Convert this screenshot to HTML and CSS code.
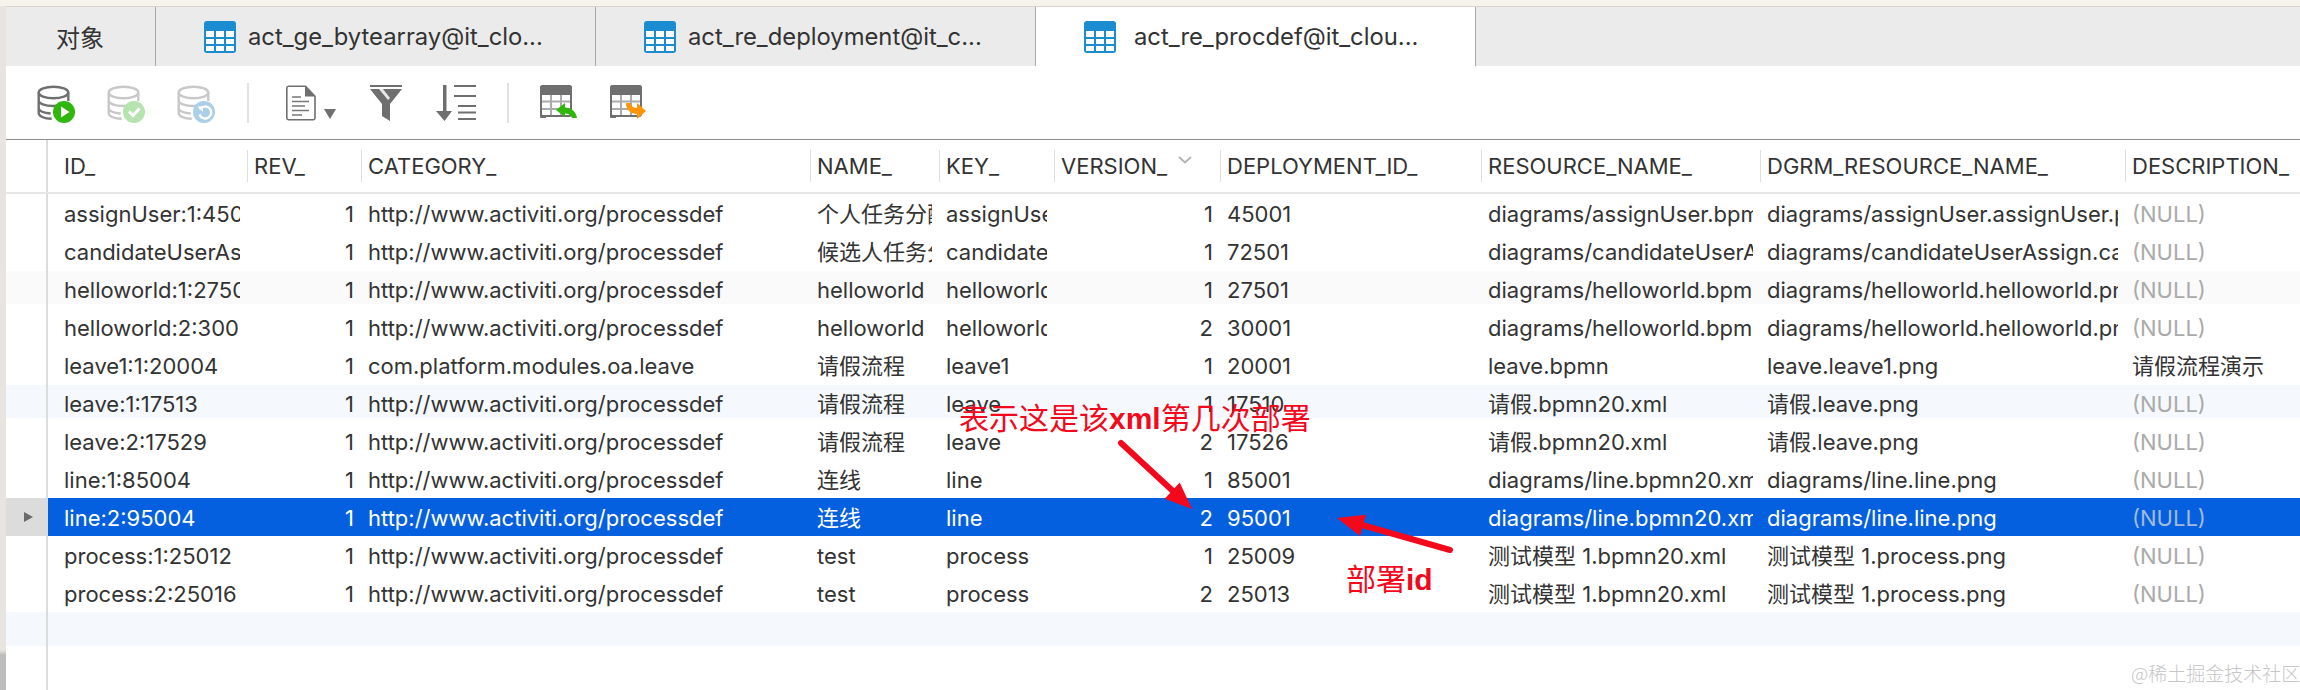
FILE: index.html
```html
<!DOCTYPE html>
<html lang="zh">
<head>
<meta charset="utf-8">
<title>act_re_procdef</title>
<link rel="stylesheet" href="styles.css">
</head>
<body>
<svg width="0" height="0" class="defs">
  <defs>
    <symbol id="tbl" viewBox="0 0 32 32">
      <rect width="32" height="32" rx="3" fill="#1b8ccf"/>
      <path fill="#fff" d="M2 10h8v6H2zM12 10h8v6h-8zM22 10h8v6h-8zM2 18h8v5H2zM12 18h8v5h-8zM22 18h8v5h-8zM2 25h8v5H2zM12 25h8v5h-8zM22 25h8v5h-8z"/>
    </symbol>
    <symbol id="db" viewBox="0 0 38 38">
      <g fill="none" stroke="currentColor" stroke-width="2.4">
        <ellipse cx="16.5" cy="7.500" rx="14.800" ry="5.800"/>
        <path d="M1.700 7.500V28c0 3 5 5.800 13 5.800M31.300 7.500V16M1.700 15.500c0 3 6 5.500 14.800 5.500 3 0 5-.3 7-.8M1.700 23c0 3 5 5.200 12 5.500"/>
      </g>
    </symbol>
    <symbol id="grid" viewBox="0 0 38 36">
      <rect x="1" y="1" width="30" height="30" rx="2" fill="#fff" stroke="#6f6f6f" stroke-width="2"/>
      <path d="M3 0h26a3 3 0 0 1 3 3v7H0V3a3 3 0 0 1 3-3z" fill="#6f6f6f"/>
      <path d="M2 16.500h28M2 24h28M11 10v20M21 10v20" stroke="#ababab" stroke-width="2"/>
      <path d="M0 3v27a2 2 0 0 0 2 2h4" fill="none" stroke="#6f6f6f" stroke-width="2"/>
    </symbol>
  </defs>
</svg>
<div class="app">
  <nav class="tabs">
    <div class="tab tab-obj">对象</div>
    <div class="tab"><svg class="tab-icon"><use href="#tbl"/></svg><span>act_ge_bytearray@it_clo...</span></div>
    <div class="tab"><svg class="tab-icon"><use href="#tbl"/></svg><span>act_re_deployment@it_c...</span></div>
    <div class="tab tab-active"><svg class="tab-icon"><use href="#tbl"/></svg><span>act_re_procdef@it_clou...</span></div>
  </nav>
  <div class="toolbar">
    <svg class="ico-db db-run" viewBox="0 0 38 38"><use href="#db" width="38" height="38"/><circle cx="27" cy="27" r="11" fill="#2fb70b"/><path d="M24 21.500l8.500 5.500-8.500 5.500z" fill="#fff"/></svg>
    <svg class="ico-db db-off" viewBox="0 0 38 38"><use href="#db" width="38" height="38"/><circle cx="27" cy="27" r="11" fill="#b5e4ae"/><path d="M22 26.500l4 4 6.500-7" fill="none" stroke="#fff" stroke-width="3"/></svg>
    <svg class="ico-db db-off" viewBox="0 0 38 38"><use href="#db" width="38" height="38"/><circle cx="27" cy="27" r="11" fill="#a9cfe9"/><path d="M23 24.500a6 6 0 1 1-.5 5" fill="none" stroke="#fff" stroke-width="2.400"/><path d="M20.500 21.500h5.500v5.500z" fill="#fff"/></svg>
    <i class="tool-sep"></i>
    <svg class="ico-doc" viewBox="0 0 50 36"><path d="M2.500 1.200h17l9.500 10V33a1.800 1.800 0 0 1-1.800 1.800H2.500A1.800 1.800 0 0 1 .8 33V3a1.800 1.800 0 0 1 1.700-1.800z" fill="#fff" stroke="#6f6f6f" stroke-width="1.600"/><path d="M19 1l10 10.500H19z" fill="#6f6f6f"/><path d="M6 12h9M6 16.500h17M6 21h13M6 25.500h17M6 30h10" stroke="#777" stroke-width="1.600"/><path d="M38 24h12l-6 10z" fill="#6f6f6f"/></svg>
    <svg class="ico-filter" viewBox="0 0 32 36"><path d="M0 0h32v2H0z" fill="#6f6f6f"/><path d="M0 4h32L20 19v17l-8-5V19z" fill="#6f6f6f"/><path d="M9 4h4l7 9-2 2z" fill="#e9e9e9"/></svg>
    <svg class="ico-sort" viewBox="0 0 40 36"><path d="M7 0h3.500v26H16l-7.500 10L0 26h7z" fill="#6f6f6f"/><path d="M18 1h22M18 11h22M22 21h18M22 27.500h18M22 34h18" stroke="#6f6f6f" stroke-width="2"/></svg>
    <i class="tool-sep tool-sep-tight"></i>
    <svg class="ico-tbl" viewBox="0 0 38 36"><use href="#grid" width="38" height="36"/><path d="M16 25l9-7v4.500c6 .3 11 3.500 12 10.500h-5c-1-3-3.500-4.500-7-4.500V32z" fill="#2fb70b"/></svg>
    <svg class="ico-tbl" viewBox="0 0 38 36"><use href="#grid" width="38" height="36"/><path d="M16 18h4.500c.5 3 3 5 6.500 5v-5l9 8-9 8v-5c-6 0-11-4-11-11z" fill="#ff9407"/></svg>
  </div>
  <div class="head">
    <div class="gutter"></div>
    <div class="hc hc-first">ID_</div>
    <div class="hc">REV_</div>
    <div class="hc">CATEGORY_</div>
    <div class="hc">NAME_</div>
    <div class="hc">KEY_</div>
    <div class="hc hc-sort">VERSION_<svg class="chev" viewBox="0 0 14 8"><path d="M1 1l6 5.500L13 1" fill="none" stroke="#b4b4b4" stroke-width="2"/></svg></div>
    <div class="hc">DEPLOYMENT_ID_</div>
    <div class="hc">RESOURCE_NAME_</div>
    <div class="hc">DGRM_RESOURCE_NAME_</div>
    <div class="hc">DESCRIPTION_</div>
  </div>
  <div class="rows">
    <div class="row"><div class="gutter"></div><div class="c c-first">assignUser:1:45004</div><div class="c num">1</div><div class="c">http://www.activiti.org/processdef</div><div class="c">个人任务分配流程</div><div class="c">assignUser</div><div class="c num">1</div><div class="c">45001</div><div class="c">diagrams/assignUser.bpmn20.xml</div><div class="c">diagrams/assignUser.assignUser.png</div><div class="c null">(NULL)</div></div>
    <div class="row"><div class="gutter"></div><div class="c c-first">candidateUserAssign:1:72504</div><div class="c num">1</div><div class="c">http://www.activiti.org/processdef</div><div class="c">候选人任务分配</div><div class="c">candidateUserAssign</div><div class="c num">1</div><div class="c">72501</div><div class="c">diagrams/candidateUserAssign.bpmn20.xml</div><div class="c">diagrams/candidateUserAssign.candidateUserAssign.png</div><div class="c null">(NULL)</div></div>
    <div class="row stripe-gray"><div class="gutter"></div><div class="c c-first">helloworld:1:27504</div><div class="c num">1</div><div class="c">http://www.activiti.org/processdef</div><div class="c">helloworld</div><div class="c">helloworld</div><div class="c num">1</div><div class="c">27501</div><div class="c">diagrams/helloworld.bpmn20.xml</div><div class="c">diagrams/helloworld.helloworld.png</div><div class="c null">(NULL)</div></div>
    <div class="row"><div class="gutter"></div><div class="c c-first">helloworld:2:30004</div><div class="c num">1</div><div class="c">http://www.activiti.org/processdef</div><div class="c">helloworld</div><div class="c">helloworld</div><div class="c num">2</div><div class="c">30001</div><div class="c">diagrams/helloworld.bpmn20.xml</div><div class="c">diagrams/helloworld.helloworld.png</div><div class="c null">(NULL)</div></div>
    <div class="row"><div class="gutter"></div><div class="c c-first">leave1:1:20004</div><div class="c num">1</div><div class="c">com.platform.modules.oa.leave</div><div class="c">请假流程</div><div class="c">leave1</div><div class="c num">1</div><div class="c">20001</div><div class="c">leave.bpmn</div><div class="c">leave.leave1.png</div><div class="c">请假流程演示</div></div>
    <div class="row stripe-blue"><div class="gutter"></div><div class="c c-first">leave:1:17513</div><div class="c num">1</div><div class="c">http://www.activiti.org/processdef</div><div class="c">请假流程</div><div class="c">leave</div><div class="c num">1</div><div class="c">17510</div><div class="c">请假.bpmn20.xml</div><div class="c">请假.leave.png</div><div class="c null">(NULL)</div></div>
    <div class="row"><div class="gutter"></div><div class="c c-first">leave:2:17529</div><div class="c num">1</div><div class="c">http://www.activiti.org/processdef</div><div class="c">请假流程</div><div class="c">leave</div><div class="c num">2</div><div class="c">17526</div><div class="c">请假.bpmn20.xml</div><div class="c">请假.leave.png</div><div class="c null">(NULL)</div></div>
    <div class="row"><div class="gutter"></div><div class="c c-first">line:1:85004</div><div class="c num">1</div><div class="c">http://www.activiti.org/processdef</div><div class="c">连线</div><div class="c">line</div><div class="c num">1</div><div class="c">85001</div><div class="c">diagrams/line.bpmn20.xml</div><div class="c">diagrams/line.line.png</div><div class="c null">(NULL)</div></div>
    <div class="row selected"><div class="gutter"><svg class="marker" viewBox="0 0 9 10"><path d="M0 0l9 5-9 5z" fill="#6b6b6b"/></svg></div><div class="c c-first">line:2:95004</div><div class="c num">1</div><div class="c">http://www.activiti.org/processdef</div><div class="c">连线</div><div class="c">line</div><div class="c num">2</div><div class="c">95001</div><div class="c">diagrams/line.bpmn20.xml</div><div class="c">diagrams/line.line.png</div><div class="c null">(NULL)</div></div>
    <div class="row"><div class="gutter"></div><div class="c c-first">process:1:25012</div><div class="c num">1</div><div class="c">http://www.activiti.org/processdef</div><div class="c">test</div><div class="c">process</div><div class="c num">1</div><div class="c">25009</div><div class="c">测试模型 1.bpmn20.xml</div><div class="c">测试模型 1.process.png</div><div class="c null">(NULL)</div></div>
    <div class="row"><div class="gutter"></div><div class="c c-first">process:2:25016</div><div class="c num">1</div><div class="c">http://www.activiti.org/processdef</div><div class="c">test</div><div class="c">process</div><div class="c num">2</div><div class="c">25013</div><div class="c">测试模型 1.bpmn20.xml</div><div class="c">测试模型 1.process.png</div><div class="c null">(NULL)</div></div>
    <div class="row row-empty"><div class="gutter"></div></div>
    <div class="row-fill"><div class="gutter"></div></div>
  </div>
</div>
<svg class="arrows" viewBox="0 0 2300 690">
  <path d="M1121 443L1174 492M1450 550L1362 525" stroke="#f4081c" stroke-width="6" stroke-linecap="round" fill="none"/>
  <path d="M1192 509L1164.700 498.700L1179.700 482.500zM1337 518L1366 514.800L1360 536z" fill="#f4081c"/>
</svg>
<div class="note note-version">表示这是该<b>xml</b>第几次部署</div>
<div class="note note-id">部署<b>id</b></div>
<div class="watermark">@稀土掘金技术社区</div>
</body>
</html>
```

FILE: styles.css
```css
* { box-sizing: border-box; }
html, body { margin: 0; height: 100%; }
body {
  position: relative;
  height: 690px;
  overflow: hidden;
  padding: 6px 0 0 6px;
  background: linear-gradient(#f6f2ec 0, #f6f2ec 6px, #e8e5e0 6px, #e8e5e0 650px, #bdbdbd 655px);
  font-family: Inter, "Noto Sans CJK SC", sans-serif;
  font-size: 22px;
  color: #333;
}
.defs { position: absolute; }
.app {
  display: flex;
  flex-direction: column;
  height: 684px;
  background: #fff;
  border-top: 1px solid #d8d5d0;
}

/* tabs */
.tabs {
  display: flex;
  height: 59px;
  flex: none;
  background: #ebebeb;
  font-size: 23.8px;
}
.tab {
  display: flex;
  align-items: center;
  gap: 12px;
  width: 440px;
  padding-left: 48px;
  border-right: 1px solid #a9a9a9;
  white-space: nowrap;
}
.tab-obj { width: 150px; padding-left: 50px; font-size: 24px; }
.tab-active { background: #fff; gap: 18px; }
.tab-icon { width: 32px; height: 32px; flex: none; }

/* toolbar */
.toolbar {
  display: flex;
  align-items: center;
  height: 74px;
  flex: none;
  padding-left: 31px;
  border-bottom: 1px solid #8c8c8c;
}
.ico-db { width: 38px; height: 38px; margin-right: 32px; margin-top: 2px; color: #6f6f6f; }
.db-off { color: #c8c8c8; }
.tool-sep { width: 2px; height: 40px; background: #e2e2e2; margin-right: 37px; }
.tool-sep-tight { margin-right: 31px; }
.ico-doc { width: 50px; height: 36px; margin-right: 34px; margin-top: 1px; }
.ico-filter { width: 32px; height: 36px; margin-right: 34px; margin-top: 1px; }
.ico-sort { width: 40px; height: 36px; margin-right: 31px; margin-top: 1px; }
.ico-tbl { width: 38px; height: 36px; margin-right: 32px; margin-top: 1px; }

/* grid shared by header and rows */
.head, .row {
  display: grid;
  grid-template-columns: 42px 199px 114px 449px 129px 115px 166px 261px 279px 365px 175px;
}
.gutter { border-right: 2px solid #dcdcdc; display: flex; align-items: center; padding-left: 18px; }
.head {
  height: 54px;
  flex: none;
  border-bottom: 2px solid #e6e6e6;
  align-items: center;
}
.head .gutter { align-self: stretch; }
.hc {
  height: 32px;
  line-height: 32px;
  padding-left: 6px;
  border-left: 1px solid #dedede;
  white-space: nowrap;
}
.hc-first { border-left: 0; padding-left: 16px; }
.hc-sort { display: flex; align-items: flex-start; }
.chev { width: 14px; height: 8px; margin: 6px 0 0 11px; }

/* data rows */
.rows { display: flex; flex-direction: column; flex: 1; }
.row { height: 38px; flex: none; line-height: 38px; background-repeat: no-repeat; }
.stripe-gray { background-image: linear-gradient(#fafafa, #fafafa); background-size: 100% 33px; background-position: 0 1px; }
.stripe-blue { background-image: linear-gradient(#f5f9fd, #f5f9fd); background-size: 100% 33px; background-position: 0 1px; }
.row-empty { background-image: linear-gradient(#f5f9fd, #f5f9fd); background-size: 100% 34px; }
.row-fill { flex: 1; display: flex; }
.row-fill .gutter { width: 42px; }
.c {
  padding: 1px 7px 0 7px;
  overflow: hidden;
  white-space: nowrap;
  clip-path: inset(0 7px 0 0);
}
.c-first { padding-left: 16px; }
.num { text-align: right; }
.null { color: #aaa; }
.selected { background: #0560df; color: #fff; }
.selected .gutter { background: #dcdcdc; }
.selected .null { color: #a3bbdb; }
.marker { width: 9px; height: 10px; }

/* annotations drawn over the grid */
.arrows { position: absolute; left: 0; top: 0; width: 2300px; height: 690px; pointer-events: none; }
.note {
  position: absolute;
  font-family: "Noto Sans CJK SC", sans-serif;
  font-size: 30px;
  line-height: 36px;
  color: #f4081c;
  white-space: nowrap;
}
.note b { font-family: "Liberation Sans", sans-serif; }
.note-version { left: 959px; top: 398px; }
.note-id { left: 1346px; top: 559px; }
.watermark {
  position: absolute;
  left: 2131px;
  top: 661px;
  font-family: "Noto Sans CJK SC", sans-serif;
  font-weight: 300;
  font-size: 19px;
  line-height: 24px;
  color: #c6c6c6;
  white-space: nowrap;
}
```
